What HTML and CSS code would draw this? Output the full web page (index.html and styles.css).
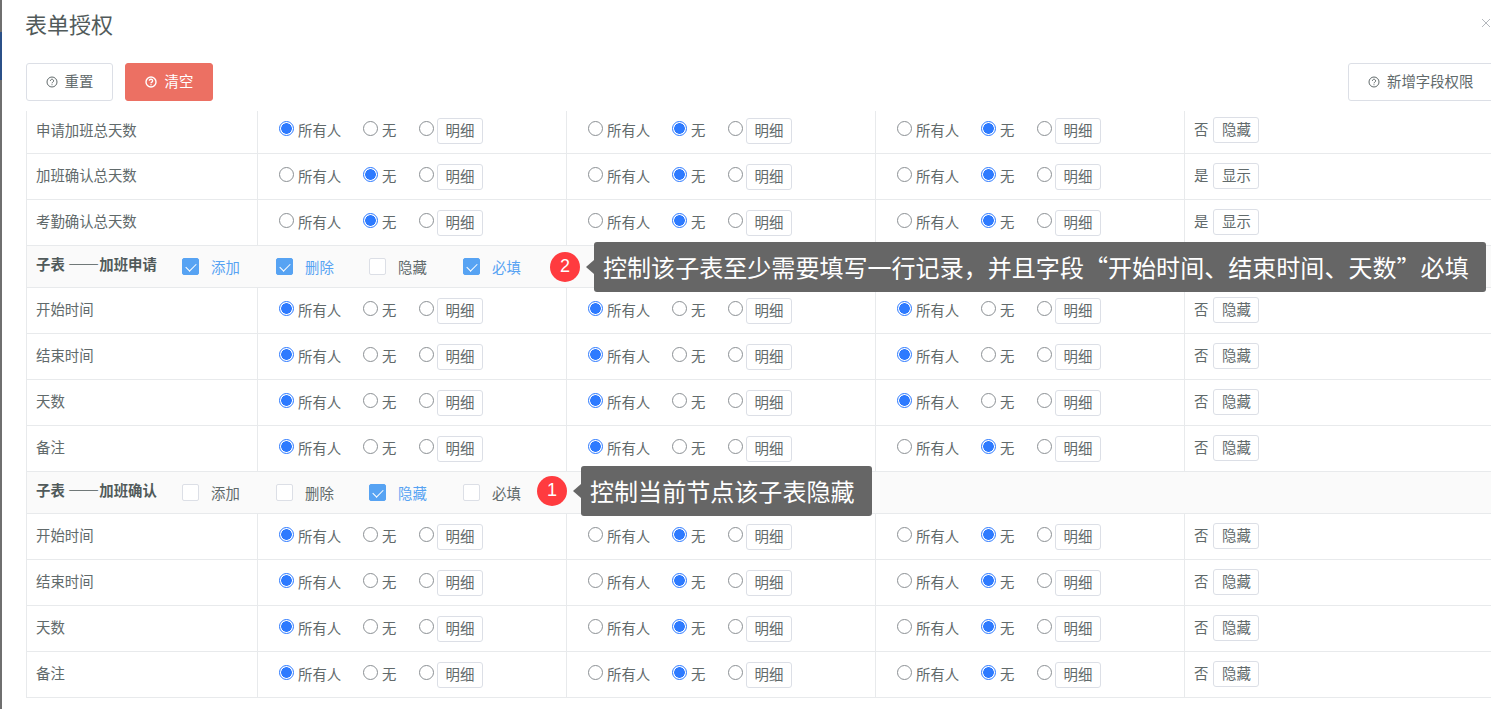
FILE: index.html
```html
<!DOCTYPE html>
<html lang="zh">
<head>
<meta charset="utf-8">
<title>表单授权</title>
<link rel="stylesheet" href="styles.css">
</head>
<body>
<div class="backdrop"><div class="accent"></div></div>
<main class="dialog">
  <header class="head">
    <h1 class="title">表单授权</h1>
    <svg class="close" viewBox="0 0 10 10"><path d="M1 1l8 8M9 1l-8 8"/></svg>
  </header>
  <div class="toolbar">
    <button class="btn"><svg class="help" viewBox="0 0 12 12"><circle cx="6" cy="6" r="5"/><path d="M4.4 4.8a1.6 1.6 0 1 1 2.4 1.4c-.5.3-.8.5-.8 1.1M6 8.3v.9"/></svg>重置</button>
    <button class="btn danger"><svg class="help" viewBox="0 0 12 12"><circle cx="6" cy="6" r="5"/><path d="M4.4 4.8a1.6 1.6 0 1 1 2.4 1.4c-.5.3-.8.5-.8 1.1M6 8.3v.9"/></svg>清空</button>
    <button class="btn add"><svg class="help" viewBox="0 0 12 12"><circle cx="6" cy="6" r="5"/><path d="M4.4 4.8a1.6 1.6 0 1 1 2.4 1.4c-.5.3-.8.5-.8 1.1M6 8.3v.9"/></svg>新增字段权限</button>
  </div>
  <div class="table">
    <div class="row first"><div class="name">申请加班总天数</div>
      <div class="cell"><span class="opt o1"><i class="radio on"></i>所有人</span><span class="opt o2"><i class="radio"></i>无</span><span class="opt o3"><i class="radio"></i></span><span class="mini">明细</span></div>
      <div class="cell"><span class="opt o1"><i class="radio"></i>所有人</span><span class="opt o2"><i class="radio on"></i>无</span><span class="opt o3"><i class="radio"></i></span><span class="mini">明细</span></div>
      <div class="cell"><span class="opt o1"><i class="radio"></i>所有人</span><span class="opt o2"><i class="radio on"></i>无</span><span class="opt o3"><i class="radio"></i></span><span class="mini">明细</span></div>
      <div class="cell last">否<span class="mini">隐藏</span></div></div>
    <div class="row"><div class="name">加班确认总天数</div>
      <div class="cell"><span class="opt o1"><i class="radio"></i>所有人</span><span class="opt o2"><i class="radio on"></i>无</span><span class="opt o3"><i class="radio"></i></span><span class="mini">明细</span></div>
      <div class="cell"><span class="opt o1"><i class="radio"></i>所有人</span><span class="opt o2"><i class="radio on"></i>无</span><span class="opt o3"><i class="radio"></i></span><span class="mini">明细</span></div>
      <div class="cell"><span class="opt o1"><i class="radio"></i>所有人</span><span class="opt o2"><i class="radio on"></i>无</span><span class="opt o3"><i class="radio"></i></span><span class="mini">明细</span></div>
      <div class="cell last">是<span class="mini">显示</span></div></div>
    <div class="row"><div class="name">考勤确认总天数</div>
      <div class="cell"><span class="opt o1"><i class="radio"></i>所有人</span><span class="opt o2"><i class="radio on"></i>无</span><span class="opt o3"><i class="radio"></i></span><span class="mini">明细</span></div>
      <div class="cell"><span class="opt o1"><i class="radio"></i>所有人</span><span class="opt o2"><i class="radio on"></i>无</span><span class="opt o3"><i class="radio"></i></span><span class="mini">明细</span></div>
      <div class="cell"><span class="opt o1"><i class="radio"></i>所有人</span><span class="opt o2"><i class="radio on"></i>无</span><span class="opt o3"><i class="radio"></i></span><span class="mini">明细</span></div>
      <div class="cell last">是<span class="mini">显示</span></div></div>

    <div class="sub"><b class="sub-title">子表 <span class="dash">——</span>加班申请</b>
      <span class="chk c1 on"><i class="box"></i>添加</span><span class="chk c2 on"><i class="box"></i>删除</span><span class="chk c3"><i class="box"></i>隐藏</span><span class="chk c4 on"><i class="box"></i>必填</span>
      <span class="badge b2">2</span>
      <span class="tip t2">控制该子表至少需要填写一行记录，并且字段“开始时间、结束时间、天数”必填</span></div>
    <div class="row"><div class="name">开始时间</div>
      <div class="cell"><span class="opt o1"><i class="radio on"></i>所有人</span><span class="opt o2"><i class="radio"></i>无</span><span class="opt o3"><i class="radio"></i></span><span class="mini">明细</span></div>
      <div class="cell"><span class="opt o1"><i class="radio on"></i>所有人</span><span class="opt o2"><i class="radio"></i>无</span><span class="opt o3"><i class="radio"></i></span><span class="mini">明细</span></div>
      <div class="cell"><span class="opt o1"><i class="radio on"></i>所有人</span><span class="opt o2"><i class="radio"></i>无</span><span class="opt o3"><i class="radio"></i></span><span class="mini">明细</span></div>
      <div class="cell last">否<span class="mini">隐藏</span></div></div>
    <div class="row"><div class="name">结束时间</div>
      <div class="cell"><span class="opt o1"><i class="radio on"></i>所有人</span><span class="opt o2"><i class="radio"></i>无</span><span class="opt o3"><i class="radio"></i></span><span class="mini">明细</span></div>
      <div class="cell"><span class="opt o1"><i class="radio on"></i>所有人</span><span class="opt o2"><i class="radio"></i>无</span><span class="opt o3"><i class="radio"></i></span><span class="mini">明细</span></div>
      <div class="cell"><span class="opt o1"><i class="radio on"></i>所有人</span><span class="opt o2"><i class="radio"></i>无</span><span class="opt o3"><i class="radio"></i></span><span class="mini">明细</span></div>
      <div class="cell last">否<span class="mini">隐藏</span></div></div>
    <div class="row"><div class="name">天数</div>
      <div class="cell"><span class="opt o1"><i class="radio on"></i>所有人</span><span class="opt o2"><i class="radio"></i>无</span><span class="opt o3"><i class="radio"></i></span><span class="mini">明细</span></div>
      <div class="cell"><span class="opt o1"><i class="radio on"></i>所有人</span><span class="opt o2"><i class="radio"></i>无</span><span class="opt o3"><i class="radio"></i></span><span class="mini">明细</span></div>
      <div class="cell"><span class="opt o1"><i class="radio on"></i>所有人</span><span class="opt o2"><i class="radio"></i>无</span><span class="opt o3"><i class="radio"></i></span><span class="mini">明细</span></div>
      <div class="cell last">否<span class="mini">隐藏</span></div></div>
    <div class="row"><div class="name">备注</div>
      <div class="cell"><span class="opt o1"><i class="radio on"></i>所有人</span><span class="opt o2"><i class="radio"></i>无</span><span class="opt o3"><i class="radio"></i></span><span class="mini">明细</span></div>
      <div class="cell"><span class="opt o1"><i class="radio on"></i>所有人</span><span class="opt o2"><i class="radio"></i>无</span><span class="opt o3"><i class="radio"></i></span><span class="mini">明细</span></div>
      <div class="cell"><span class="opt o1"><i class="radio"></i>所有人</span><span class="opt o2"><i class="radio on"></i>无</span><span class="opt o3"><i class="radio"></i></span><span class="mini">明细</span></div>
      <div class="cell last">否<span class="mini">隐藏</span></div></div>

    <div class="sub"><b class="sub-title">子表 <span class="dash">——</span>加班确认</b>
      <span class="chk c1"><i class="box"></i>添加</span><span class="chk c2"><i class="box"></i>删除</span><span class="chk c3 on"><i class="box"></i>隐藏</span><span class="chk c4"><i class="box"></i>必填</span>
      <span class="badge b1">1</span>
      <span class="tip t1">控制当前节点该子表隐藏</span></div>
    <div class="row"><div class="name">开始时间</div>
      <div class="cell"><span class="opt o1"><i class="radio on"></i>所有人</span><span class="opt o2"><i class="radio"></i>无</span><span class="opt o3"><i class="radio"></i></span><span class="mini">明细</span></div>
      <div class="cell"><span class="opt o1"><i class="radio"></i>所有人</span><span class="opt o2"><i class="radio on"></i>无</span><span class="opt o3"><i class="radio"></i></span><span class="mini">明细</span></div>
      <div class="cell"><span class="opt o1"><i class="radio"></i>所有人</span><span class="opt o2"><i class="radio on"></i>无</span><span class="opt o3"><i class="radio"></i></span><span class="mini">明细</span></div>
      <div class="cell last">否<span class="mini">隐藏</span></div></div>
    <div class="row"><div class="name">结束时间</div>
      <div class="cell"><span class="opt o1"><i class="radio on"></i>所有人</span><span class="opt o2"><i class="radio"></i>无</span><span class="opt o3"><i class="radio"></i></span><span class="mini">明细</span></div>
      <div class="cell"><span class="opt o1"><i class="radio"></i>所有人</span><span class="opt o2"><i class="radio on"></i>无</span><span class="opt o3"><i class="radio"></i></span><span class="mini">明细</span></div>
      <div class="cell"><span class="opt o1"><i class="radio"></i>所有人</span><span class="opt o2"><i class="radio on"></i>无</span><span class="opt o3"><i class="radio"></i></span><span class="mini">明细</span></div>
      <div class="cell last">否<span class="mini">隐藏</span></div></div>
    <div class="row"><div class="name">天数</div>
      <div class="cell"><span class="opt o1"><i class="radio on"></i>所有人</span><span class="opt o2"><i class="radio"></i>无</span><span class="opt o3"><i class="radio"></i></span><span class="mini">明细</span></div>
      <div class="cell"><span class="opt o1"><i class="radio"></i>所有人</span><span class="opt o2"><i class="radio on"></i>无</span><span class="opt o3"><i class="radio"></i></span><span class="mini">明细</span></div>
      <div class="cell"><span class="opt o1"><i class="radio"></i>所有人</span><span class="opt o2"><i class="radio on"></i>无</span><span class="opt o3"><i class="radio"></i></span><span class="mini">明细</span></div>
      <div class="cell last">否<span class="mini">隐藏</span></div></div>
    <div class="row"><div class="name">备注</div>
      <div class="cell"><span class="opt o1"><i class="radio on"></i>所有人</span><span class="opt o2"><i class="radio"></i>无</span><span class="opt o3"><i class="radio"></i></span><span class="mini">明细</span></div>
      <div class="cell"><span class="opt o1"><i class="radio"></i>所有人</span><span class="opt o2"><i class="radio on"></i>无</span><span class="opt o3"><i class="radio"></i></span><span class="mini">明细</span></div>
      <div class="cell"><span class="opt o1"><i class="radio"></i>所有人</span><span class="opt o2"><i class="radio on"></i>无</span><span class="opt o3"><i class="radio"></i></span><span class="mini">明细</span></div>
      <div class="cell last">否<span class="mini">隐藏</span></div></div>
  </div>
</main>
</body>
</html>
```
FILE: styles.css
```css
* { box-sizing: border-box; }
html, body { margin: 0; height: 100%; overflow: hidden; background: #fff; }
body {
  display: flex;
  font-family: "Noto Sans CJK SC", "Noto Sans", sans-serif;
  font-size: 14.4px;
  color: #616a6b;
}
.backdrop { width: 2px; flex: none; background: #6f6f6f; }
.accent { height: 48px; margin-top: 32px; background: #2b5088; }
.dialog { flex: 1; min-width: 0; padding-left: 24px; position: relative; }
.head { height: 63px; display: flex; align-items: flex-start; justify-content: space-between; }
.title { margin: 7px 0 0 -1px; font-size: 22px; line-height: 32px; font-weight: 400; color: #515a5a; }
.close { position: absolute; right: 0; top: 18px; width: 10px; height: 10px; fill: none; stroke: #b4b8bd; stroke-width: 1; }
.toolbar { display: flex; gap: 12px; height: 48px; align-items: flex-start; }
.btn {
  height: 38px; width: 87px; display: inline-flex; align-items: center; justify-content: center; gap: 7px;
  background: #fff; border: 1px solid #dcdfe6; border-radius: 3px;
  font: inherit; line-height: 22px; color: #616a6b; padding: 0 0 2px;
}
.help { width: 12px; height: 12px; fill: none; stroke: currentColor; stroke-width: 1; position: relative; top: 1px; }
.btn.danger { width: 88px; gap: 8px; background: #ec7063; border-color: #ec7063; color: #fff; }
.btn.danger .help { stroke-width: 1.4; }
.btn.add { width: 146px; flex: none; margin-left: auto; margin-right: -3px; justify-content: flex-start; padding-left: 19px; }
.table { margin-right: -20px; }
.row, .sub { display: flex; border-bottom: 1px solid #e8eaec; border-left: 1px solid #e8eaec; width: 1500px; }
.row { height: 46px; }
.row.first { height: 43px; }
.sub { height: 42px; background: #fafafa; position: relative; align-items: center; }
.name { width: 231px; flex: none; border-right: 1px solid #e8eaec; padding: 9px 0 0 9px; line-height: 24px; }
.row.first .name { padding-top: 7px; }
.cell { width: 309px; flex: none; border-right: 1px solid #e8eaec; display: flex; align-items: flex-start; padding: 10px 0 0 21px; }
.row.first .cell { padding-top: 7px; }
.cell.last { flex: 1; border-right: 0; padding-left: 9px; line-height: 22px; }
.opt { display: inline-flex; align-items: flex-start; line-height: 24px; height: 26px; }
.o1 { width: 84px; }
.o2 { width: 56px; }
.o3 { width: 18px; }
.radio {
  width: 15px; height: 15px; flex: none; margin: 3px 4px 0 0; border: 1px solid #8b9094; border-radius: 50%; background: #fff;
}
.radio.on { border-color: #2d7aff; background: radial-gradient(circle, #2d7aff 0 5px, #fff 5.6px); }
.mini {
  display: inline-block; width: 46px; height: 26px; line-height: 22px; text-align: center; border: 1px solid #dcdfe6; border-radius: 3px; background: #fff; white-space: nowrap;
}
.cell.last .mini { margin: -1px 0 0 5px; }
.sub-title { width: 155px; flex: none; padding-left: 9px; font-weight: 700; color: #515a5a; line-height: 24px; margin-top: -6px; white-space: nowrap; }
.dash { font-size: 15.6px; }
.chk { display: inline-flex; align-items: center; width: 94px; flex: none; }
.chk.c2 { width: 93px; }
.box { width: 17px; height: 17px; flex: none; margin-right: 12px; border: 1px solid #dcdfe6; border-radius: 2px; background: #fff; position: relative; }
.chk.on { color: #57a3f3; }
.chk.on .box { background: #57a3f3; border-color: #57a3f3; }
.chk.on .box::after {
  content: ""; position: absolute; left: 5px; top: 2px; width: 5px; height: 9px;
  border: solid #fff; border-width: 0 1px 1px 0; transform: rotate(45deg);
}
.badge {
  position: absolute; width: 30px; height: 30px; border-radius: 50%; background: #ff3b3f; color: #fff;
  text-align: center; font-family: "Liberation Sans", sans-serif; font-size: 18px; line-height: 29px;
}
.b2 { left: 523px; top: 6px; }
.b1 { left: 510px; top: 4px; }
.tip {
  position: absolute; height: 50px; line-height: 50px; background: #666; color: #fff; font-size: 24.05px; padding: 0 17px 0 9px;
  border-radius: 3px; white-space: nowrap;
}
.tip::before {
  content: ""; position: absolute; left: -8px; top: 18px; border: 7px solid transparent; border-left: 0; border-right: 8px solid #666;
}
.t2 { left: 567px; top: -4px; }
.t1 { left: 554px; top: -6px; }
```
